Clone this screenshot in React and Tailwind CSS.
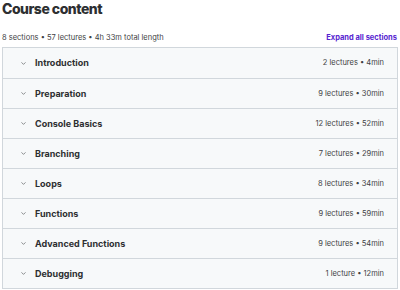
import { ChevronDown } from 'lucide-react';

const sections = [
  ['Introduction', '2 lectures', '4min'],
  ['Preparation', '9 lectures', '30min'],
  ['Console Basics', '12 lectures', '52min'],
  ['Branching', '7 lectures', '29min'],
  ['Loops', '8 lectures', '34min'],
  ['Functions', '9 lectures', '59min'],
  ['Advanced Functions', '9 lectures', '54min'],
  ['Debugging', '1 lecture', '12min'],
];

export default function App() {
  return (
    <div className="w-[400px] h-[290px] bg-white text-[#2d2f31] font-['Inter',sans-serif] overflow-hidden">
      <h2 className="pl-[2px] pt-[1px] text-[14px] leading-[16px] font-extrabold tracking-[-0.5px]">Course content</h2>
      <div className="flex items-end justify-between pl-[2px] pr-[3px] mt-[14px] h-[12px]">
        <span className="text-[7.5px] text-[#3e4143]">8 sections • 57 lectures • 4h 33m total length</span>
        <button className="text-[7.5px] font-bold text-[#5624d0]">Expand all sections</button>
      </div>
      <div className="mx-[2px] mt-[4px] border border-[#d1d7dc]">
        {sections.map(([title, count, len], i) => (
          <div key={title}
            className={`flex items-center justify-between h-[30px] bg-[#f7f9fa] pl-[17px] pr-[13px] ${i > 0 ? 'border-t border-[#d1d7dc]' : ''}`}>
            <div className="flex items-center gap-[8px]">
              <ChevronDown className="w-[7px] h-[7px] text-[#3e4143]" strokeWidth={2} />
              <span className="text-[9px] font-bold">{title}</span>
            </div>
            <span className="text-[7.5px] text-[#3e4143]">{count} • {len}</span>
          </div>
        ))}
      </div>
    </div>
  );
}
